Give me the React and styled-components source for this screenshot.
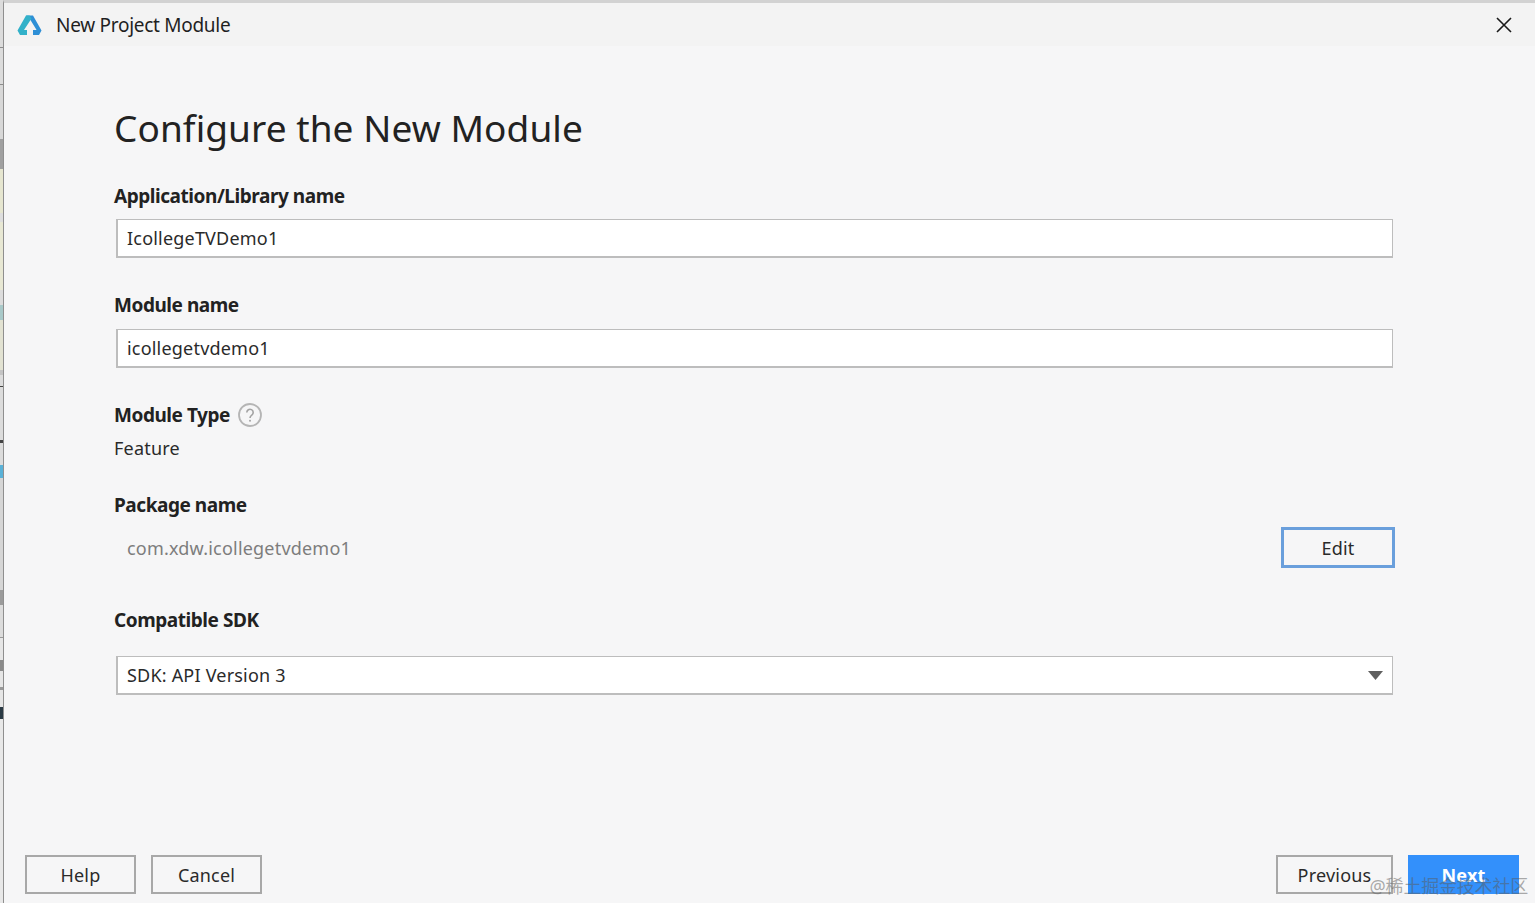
import styled, { createGlobalStyle } from "styled-components";

const GlobalStyle = createGlobalStyle`
  html, body {
    margin: 0;
    padding: 0;
    background: #f6f6f7;
  }
  * { box-sizing: border-box; }
`;

const Page = styled.div`
  position: relative;
  display: flex;
  width: 1535px;
  height: 903px;
  overflow: hidden;
  font-family: "Noto Sans", "Open Sans", sans-serif;
  color: #1f1f1f;
`;

// sliver of the window behind the dialog
const Behind = styled.div`
  display: flex;
  flex-direction: column;
  flex: 0 0 3px;
  background: #dcdcdc;
`;

const Sliver = styled.div`
  flex: ${(p) => (p.$h ? `0 0 ${p.$h}px` : "1")};
  background: ${(p) => p.$c};
`;

const Dialog = styled.div`
  flex: 1;
  display: flex;
  flex-direction: column;
  border-left: 1px solid #8f8f8f;
  border-top: 3px solid #d2d2d2;
  background: #f6f6f7;
`;

const TitleBar = styled.div`
  display: flex;
  align-items: center;
  height: 43px;
  padding: 0 23px 0 13px;
  background: #f3f3f3;
`;

const TitleText = styled.div`
  flex: 1;
  margin-left: 14px;
  font-size: 19px;
  letter-spacing: -0.28px;
`;

const Content = styled.div`
  flex: 1;
  display: flex;
  flex-direction: column;
  padding: 54px 142px 0 110px;
`;

const Heading = styled.h1`
  margin: 0 0 27px;
  font-size: 37px;
  line-height: 56px;
  font-weight: 400;
  letter-spacing: 0.07px;
  color: #222;
`;

const Label = styled.div`
  display: flex;
  align-items: center;
  gap: 8px;
  height: 26px;
  margin-top: ${(p) => p.$top || 0}px;
  font-size: 19px;
  font-weight: 700;
  letter-spacing: -0.45px;
  color: #222;
`;

const Field = styled.div`
  display: flex;
  align-items: center;
  justify-content: space-between;
  height: 39px;
  margin: ${(p) => p.$top}px 0 ${(p) => p.$bottom}px 2px;
  padding: 0 9px;
  background: #fff;
  border: 2px solid #bdbdbd;
  border-width: 1px 1px 2px 2px;
  font-size: 18px;
  letter-spacing: 0.2px;
  color: #2a2a2a;
`;

const Value = styled.div`
  margin-top: 7px;
  height: 26px;
  line-height: 26px;
  font-size: 18px;
  letter-spacing: 0.2px;
  color: #2a2a2a;
`;

const PackageRow = styled.div`
  display: flex;
  align-items: center;
  justify-content: space-between;
  height: 41px;
  margin: 9px -2px 39px 13px;
  font-size: 18px;
  letter-spacing: 0.2px;
  color: #7d7d7d;
`;

const Button = styled.button`
  width: ${(p) => p.$w}px;
  height: ${(p) => p.$h || 39}px;
  padding: 0;
  font-family: inherit;
  font-size: 18px;
  letter-spacing: 0.2px;
  color: #2a2a2a;
  background: #f6f6f7;
  border: ${(p) => (p.$focus ? "3px solid #6a9fdc" : "2px solid #a8a8a8")};
`;

const PrimaryButton = styled(Button)`
  border: none;
  background: #3390fb;
  color: #fff;
  font-size: 18px;
  font-weight: 700;
`;

const Footer = styled.div`
  display: flex;
  align-items: center;
  gap: 15px;
  height: 39px;
  margin-bottom: 9px;
  padding: 0 16px 0 21px;
`;

const Spacer = styled.div`
  flex: 1;
`;

const Watermark = styled.div`
  position: absolute;
  right: 7px;
  bottom: 5px;
  font-family: "Noto Sans", "Noto Sans CJK SC", sans-serif;
  font-size: 18px;
  letter-spacing: -0.2px;
  color: rgba(90, 90, 90, 0.5);
  white-space: nowrap;
`;

const Logo = () => (
  <svg width="25" height="22" viewBox="0 0 25 22">
    <path d="M9 1.5h7l8.500 15-2.500 4.500H16v-5h3.600L12.500 4.500z" fill="#2e8fd6" />
    <path d="M9 1.500h3.500l2 3-7.500 11.500h3v5H3L.5 16.500z" fill="#32b1c9" />
  </svg>
);

const CloseIcon = () => (
  <svg width="16" height="16" viewBox="0 0 16 16">
    <path d="M1 1l14 14M15 1L1 15" stroke="#1a1a1a" strokeWidth="1.600" fill="none" />
  </svg>
);

const HelpIcon = () => (
  <svg width="24" height="24" viewBox="0 0 24 24">
    <circle cx="12" cy="12" r="11" fill="none" stroke="#b5b5b5" strokeWidth="1.800" />
    <path d="M8.800 9.500a3.200 3.200 0 1 1 5 2.600c-1.100.8-1.800 1.300-1.800 2.900" fill="none" stroke="#a3a3a3" strokeWidth="1.600" />
    <circle cx="12" cy="17.800" r="1" fill="#a3a3a3" />
  </svg>
);

const Caret = () => (
  <svg width="15" height="9" viewBox="0 0 15 9">
    <path d="M0 0h15L7.500 9z" fill="#5f5f5f" />
  </svg>
);

const slivers = [
  [47, "#dcdcdc"], [1, "#8c8c8c"], [36, "#dcdcdc"], [1, "#8c8c8c"], [54, "#d8d8d8"],
  [30, "#a0a0a0"], [44, "#e6e6d0"], [9, "#dedede"], [68, "#e8e8d4"], [15, "#dcdcdc"],
  [15, "#a9c9c9"], [50, "#e2e2d2"], [5, "#c4c4c4"], [11, "#dcdcdc"], [1, "#444"],
  [53, "#dcdcdc"], [3, "#444"], [22, "#dcdcdc"], [13, "#5ab2d8"], [112, "#d6d6d6"],
  [15, "#9b9b9b"], [32, "#dcdcdc"], [1, "#999"], [22, "#e6e6e6"], [11, "#8a8a8a"],
  [16, "#e6e6e6"], [3, "#999"], [17, "#e6e6e6"], [12, "#2a3a44"], [0, "#e8e8e8"],
];

export default function App() {
  return (
    <>
      <GlobalStyle />
      <Page>
        <Behind>
          {slivers.map(([h, c], i) => (
            <Sliver key={i} $h={h} $c={c} />
          ))}
        </Behind>
        <Dialog>
          <TitleBar>
            <Logo />
            <TitleText>New Project Module</TitleText>
            <CloseIcon />
          </TitleBar>
          <Content>
            <Heading>Configure the New Module</Heading>
            <Label>Application/Library name</Label>
            <Field $top={10} $bottom={34}>IcollegeTVDemo1</Field>
            <Label>Module name</Label>
            <Field $top={11} $bottom={34}>icollegetvdemo1</Field>
            <Label>
              Module Type <HelpIcon />
            </Label>
            <Value>Feature</Value>
            <Label $top={31}>Package name</Label>
            <PackageRow>
              com.xdw.icollegetvdemo1
              <Button $w={114} $h={41} $focus>Edit</Button>
            </PackageRow>
            <Label>Compatible SDK</Label>
            <Field $top={23} $bottom={0}>
              SDK: API Version 3
              <Caret />
            </Field>
          </Content>
          <Footer>
            <Button $w={111}>Help</Button>
            <Button $w={111}>Cancel</Button>
            <Spacer />
            <Button $w={117}>Previous</Button>
            <PrimaryButton $w={111}>Next</PrimaryButton>
          </Footer>
        </Dialog>
        <Watermark>@稀土掘金技术社区</Watermark>
      </Page>
    </>
  );
}
